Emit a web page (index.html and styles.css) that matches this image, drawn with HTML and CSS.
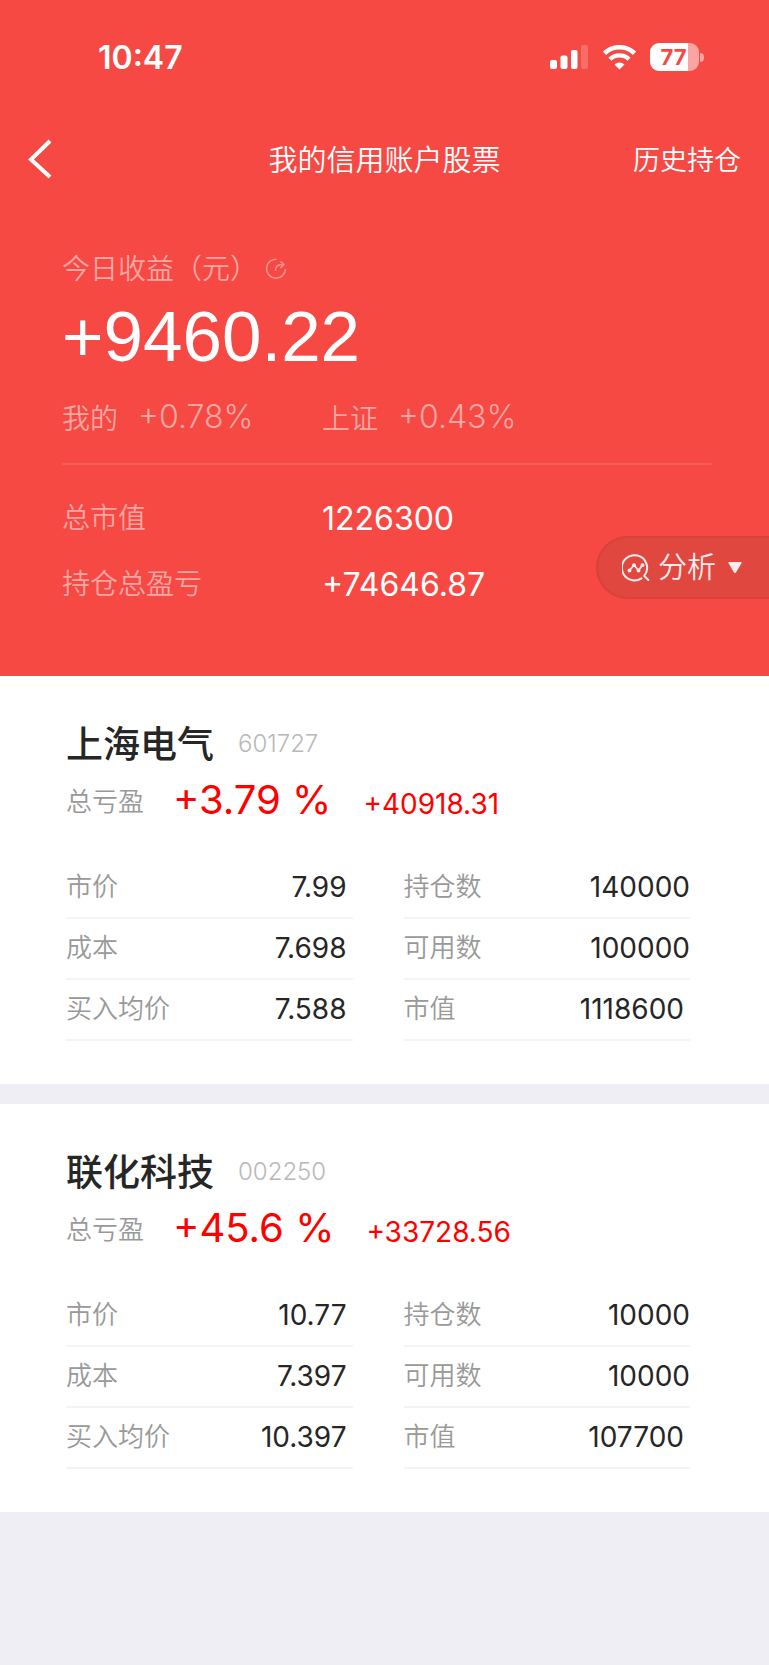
FILE: index.html
```html
<!DOCTYPE html>
<html lang="zh-CN">
<head>
<meta charset="utf-8">
<meta name="viewport" content="width=device-width, initial-scale=1">
<title>我的信用账户股票</title>
<link rel="stylesheet" href="styles.css">
</head>
<body>
<header class="hero">
  <div class="status">
    <span class="status-time">10:47</span>
    <div class="status-icons">
      <svg class="signal" width="39" height="26" viewBox="0 0 39 26" fill="#fff" aria-hidden="true">
        <rect x="0" y="16" width="7" height="9" rx="2"/>
        <rect x="10.500" y="11.500" width="7" height="13.500" rx="2"/>
        <rect x="21" y="6" width="6.500" height="19" rx="2"/>
        <rect x="31" y="1" width="7" height="24" rx="2" opacity=".2"/>
      </svg>
      <svg class="wifi" width="33" height="25" viewBox="0 0 33 25" fill="none" stroke="#fff" aria-hidden="true">
        <path d="M1.500 8.300a21.500 21.500 0 0 1 30 0" stroke-width="4.600"/>
        <path d="M7 14.200a13.600 13.600 0 0 1 19 0" stroke-width="4.400"/>
        <path d="M16.500 24.500l-5-5a7.200 7.200 0 0 1 10 0z" fill="#fff" stroke="none"/>
      </svg>
      <span class="battery"><span class="battery-body">77</span><span class="battery-tip"></span></span>
    </div>
  </div>
  <nav class="nav">
    <button class="back" type="button" aria-label="返回">
      <svg width="24" height="40" viewBox="0 0 24 40" fill="none" stroke="#fff" stroke-width="4" aria-hidden="true"><path d="M22 2L3 20.500L22 38"/></svg>
    </button>
    <h1 class="title">我的信用账户股票</h1>
    <a class="history" href="#">历史持仓</a>
  </nav>
  <section class="summary">
    <div class="today">
      <span>今日收益（元）</span>
      <button class="refresh" type="button" aria-label="刷新">
        <svg width="22" height="22" viewBox="0 0 22 22" fill="none" stroke="#fff" stroke-width="1.600" aria-hidden="true"><path d="M11.500 1.200A9.500 9.500 0 1 0 20.500 11M10.500 13C10.200 9 12 6.500 18.500 6.500M15.500 3.500l3.500 3l-3.500 3.500"/></svg>
      </button>
    </div>
    <div class="gain">+9460.22</div>
    <div class="compare">
      <div class="rate"><span class="rate-label">我的</span><span class="rate-value">+0.78%</span></div>
      <div class="rate"><span class="rate-label">上证</span><span class="rate-value">+0.43%</span></div>
    </div>
    <dl class="totals">
      <dt>总市值</dt><dd>1226300</dd>
      <dt>持仓总盈亏</dt><dd>+74646.87</dd>
    </dl>
  </section>
  <button class="analysis" type="button">
    <svg width="28" height="28" viewBox="0 0 28 28" fill="none" stroke="#fdeceb" stroke-width="2" stroke-linecap="round" stroke-linejoin="round" aria-hidden="true">
      <path d="M22.500 21.500A12.600 12.600 0 1 0 19.500 24.300M22.300 22l4 4"/>
      <path d="M7.500 16.500l4.500-5.500l4.500 5.500l4-5.500" stroke-width="1.800"/>
      <g fill="#fdeceb" stroke="none"><circle cx="7.500" cy="16.500" r="1.900"/><circle cx="12" cy="11.200" r="1.900"/><circle cx="16.500" cy="16.500" r="1.900"/><circle cx="20.500" cy="11.200" r="1.900"/></g>
    </svg>
    <span>分析</span>
    <svg width="14" height="12" viewBox="0 0 14 12" fill="#fdeceb" aria-hidden="true"><path d="M1 0h12q1 .2.600 1L8 10.500q-1 1-2 0L.400 1Q0 .200 1 0z"/></svg>
  </button>
</header>
<main class="list">
  <article class="card">
    <div class="card-head"><h2 class="name">上海电气</h2><span class="code">601727</span></div>
    <div class="profit"><span class="profit-label">总亏盈</span><span class="percent">+3.79 %</span><span class="amount">+40918.31</span></div>
    <div class="details">
      <dl class="column column-left">
        <div class="row"><dt>市价</dt><dd>7.99</dd></div>
        <div class="row"><dt>成本</dt><dd>7.698</dd></div>
        <div class="row"><dt>买入均价</dt><dd>7.588</dd></div>
      </dl>
      <dl class="column">
        <div class="row"><dt>持仓数</dt><dd>140000</dd></div>
        <div class="row"><dt>可用数</dt><dd>100000</dd></div>
        <div class="row row-inset"><dt>市值</dt><dd>1118600</dd></div>
      </dl>
    </div>
  </article>
  <article class="card">
    <div class="card-head"><h2 class="name">联化科技</h2><span class="code">002250</span></div>
    <div class="profit"><span class="profit-label">总亏盈</span><span class="percent">+45.6 %</span><span class="amount">+33728.56</span></div>
    <div class="details">
      <dl class="column column-left">
        <div class="row"><dt>市价</dt><dd>10.77</dd></div>
        <div class="row"><dt>成本</dt><dd>7.397</dd></div>
        <div class="row"><dt>买入均价</dt><dd>10.397</dd></div>
      </dl>
      <dl class="column">
        <div class="row"><dt>持仓数</dt><dd>10000</dd></div>
        <div class="row"><dt>可用数</dt><dd>10000</dd></div>
        <div class="row row-inset"><dt>市值</dt><dd>107700</dd></div>
      </dl>
    </div>
  </article>
</main>
</body>
</html>
```
FILE: styles.css
```css
* {
  box-sizing: border-box;
}

body {
  margin: 0;
  background: #efeef4;
  color: #262626;
  font-family: Inter, "Noto Sans CJK SC", sans-serif;
  font-weight: 350;
}

h1, h2, dl, dt, dd {
  margin: 0;
  font-weight: inherit;
}

button {
  margin: 0;
  padding: 0;
  border: 0;
  background: none;
  color: inherit;
  font: inherit;
}

svg {
  display: block;
}

.hero {
  position: relative;
  padding-bottom: 71px;
  background: #f64943;
  color: #fff;
}

.status {
  display: flex;
  align-items: center;
  justify-content: space-between;
  height: 114px;
  padding: 0 65px 0 98px;
}

.status-time {
  font-size: 32px;
  font-weight: 600;
}

.status-icons {
  display: flex;
  align-items: center;
  gap: 14px;
}

.battery {
  display: flex;
  align-items: center;
  gap: 1px;
}

.battery-body {
  width: 49px;
  height: 28px;
  padding-right: 2px;
  border-radius: 9px;
  background: linear-gradient(to right, #fff 77%, #fba4a1 77%);
  color: #f64943;
  font-size: 22px;
  font-weight: 700;
  line-height: 28px;
  text-align: center;
}

.battery-tip {
  width: 4px;
  height: 9px;
  border-radius: 0 4px 4px 0;
  background: #fba4a1;
}

.nav {
  display: grid;
  grid-template-columns: 1fr auto 1fr;
  align-items: center;
  height: 90px;
  padding: 0 28px;
}

.back {
  justify-self: start;
}

.title {
  padding-top: 3px;
  font-size: 29px;
  line-height: 40px;
}

.history {
  justify-self: end;
  padding-top: 3px;
  color: #fff;
  font-size: 27px;
  line-height: 40px;
  text-decoration: none;
}

.summary {
  padding: 45px 57px 0 62px;
  font-size: 28px;
}

.today {
  display: flex;
  align-items: center;
  gap: 7px;
  color: #fba6a3;
  line-height: 40px;
}

.refresh {
  opacity: .4;
}

.gain {
  margin-top: 8px;
  font-family: "Liberation Sans", sans-serif;
  font-size: 71px;
  line-height: 80px;
}

.compare {
  display: grid;
  grid-template-columns: 2fr 3fr;
  margin-top: 20px;
  padding-bottom: 22px;
  border-bottom: 2px solid #f85d57;
  color: #fba6a3;
}

.rate {
  display: flex;
  gap: 20px;
}

.rate-label {
  line-height: 44px;
}

.rate-value {
  font-size: 32px;
  line-height: 40px;
}

.totals {
  display: grid;
  grid-template-columns: 2fr 3fr;
  row-gap: 26px;
  margin-top: 34px;
}

.totals dt {
  color: #fba6a3;
  line-height: 38px;
}

.totals dd {
  font-size: 32px;
  font-weight: 400;
  line-height: 40px;
}

.analysis {
  position: absolute;
  right: 0;
  bottom: 77px;
  display: flex;
  align-items: center;
  height: 63px;
  padding: 0 27px 0 24px;
  border: 2px solid #da403c;
  border-right: 0;
  border-radius: 32px 0 0 32px;
  background: #df473f;
  color: #fdeceb;
  font-size: 29px;
  line-height: 40px;
}

.analysis span {
  margin: 0 12px 0 8px;
}

.list {
  display: grid;
  gap: 20px;
}

.card {
  padding: 43px 79px 43px 66px;
  background: #fff;
}

.card-head {
  display: flex;
  gap: 24px;
}

.name {
  font-size: 37px;
  font-weight: 500;
  line-height: 52px;
}

.code {
  color: #b8b8b8;
  font-size: 24px;
  line-height: 49px;
}

.profit {
  display: flex;
  align-items: baseline;
  margin-top: 4px;
  color: #f00;
  line-height: 50px;
}

.profit-label {
  align-self: flex-start;
  margin-right: 29px;
  color: #999;
  font-size: 26px;
  line-height: 54px;
}

.percent {
  margin-right: 32px;
  font-size: 40px;
  font-weight: 400;
}

.amount {
  font-size: 28px;
  font-weight: 400;
  line-height: 40px;
}

.details {
  display: grid;
  grid-template-columns: 1fr 1fr;
  gap: 51px;
  margin-top: 29px;
}

.row {
  display: flex;
  justify-content: space-between;
  height: 61px;
  border-bottom: 2px solid #f4f4f4;
  font-size: 28px;
  line-height: 59px;
}

.row dt {
  color: #999;
  font-size: 26px;
  line-height: 58px;
}

.row dd {
  font-weight: 400;
}

.column-left dd,
.row-inset dd {
  padding-right: 6px;
}
```
